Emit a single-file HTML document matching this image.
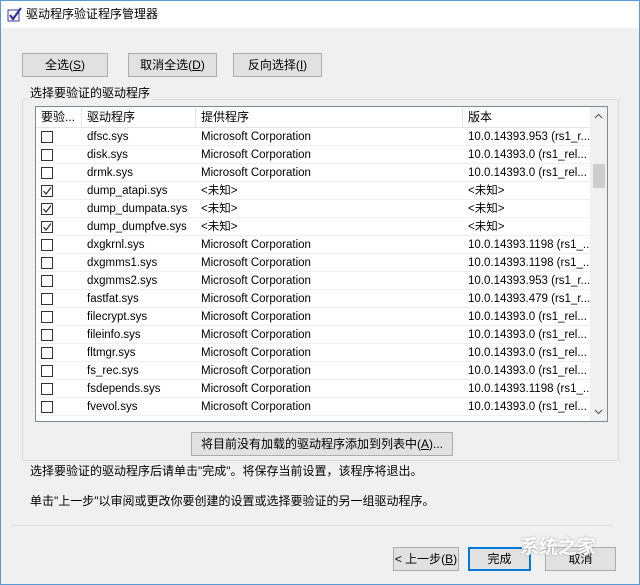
<!DOCTYPE html>
<html><head><meta charset="utf-8"><style>
*{margin:0;padding:0;box-sizing:border-box}
body{width:640px;height:585px;background:#f0f0f0;font-family:"Liberation Sans","Noto Sans CJK SC",sans-serif;font-size:12px;line-height:14px;color:#000;position:relative;overflow:hidden}
.a{position:absolute}
.btn{position:absolute;background:#e1e1e1;border:1px solid #adadad;text-align:center;font-size:12px}
.row{position:absolute;left:36px;width:554px;height:18px;border-bottom:1px solid #f0f0f0;background:#fff}
.row span{position:absolute;top:0;line-height:18px;white-space:nowrap;font-size:11.5px}
.cb{position:absolute;left:5px;top:3px;width:12px;height:12px;border:1px solid #333;background:#fff}
.cb svg{position:absolute;left:0;top:0}
</style></head><body>
<div class="a" style="left:0;top:0;width:640px;height:585px;border:1px solid #5b9bd5"></div>
<div class="a" style="left:1px;top:1px;width:638px;height:27px;background:#fff"></div>
<svg class="a" style="left:7px;top:6px" width="16" height="16"><rect x="1" y="4" width="11" height="11" fill="#fff" stroke="#3a3ab0"/><path d="M3 9 L6 13 L14 2" stroke="#3030a0" stroke-width="2.2" fill="none"/></svg>
<div class="a" style="left:26px;top:7px;font-size:12px">驱动程序验证程序管理器</div>
<div class="btn" style="left:22px;top:53px;width:86px;height:24px;line-height:22px">全选(<u>S</u>)</div>
<div class="btn" style="left:128px;top:53px;width:89px;height:24px;line-height:22px">取消全选(<u>D</u>)</div>
<div class="btn" style="left:233px;top:53px;width:89px;height:24px;line-height:22px">反向选择(<u>I</u>)</div>
<div class="a" style="left:22px;top:99px;width:597px;height:362px;border:1px solid #dcdcdc"></div>
<div class="a" style="left:28px;top:86px;background:#f0f0f0;padding:0 2px">选择要验证的驱动程序</div>
<div class="a" style="left:35px;top:106px;width:573px;height:316px;border:1px solid #828790;background:#fff"></div>
<div class="a" style="left:36px;top:107px;width:554px;height:21px;background:#fff;border-bottom:1px solid #e5e5e5"></div>
<div class="a" style="left:41px;top:110px">要验...</div>
<div class="a" style="left:87px;top:110px">驱动程序</div>
<div class="a" style="left:201px;top:110px">提供程序</div>
<div class="a" style="left:468px;top:110px">版本</div>
<div class="a" style="left:81px;top:107px;width:1px;height:21px;background:#e5e5e5"></div>
<div class="a" style="left:195px;top:107px;width:1px;height:21px;background:#e5e5e5"></div>
<div class="a" style="left:462px;top:107px;width:1px;height:21px;background:#e5e5e5"></div>
<div id="rows"></div>
<div class="a" style="left:590px;top:107px;width:17px;height:314px;background:#f0f0f0"></div>
<svg class="a" style="left:593px;top:112px" width="11" height="8"><path d="M2 6 L5.5 2.5 L9 6" stroke="#606060" stroke-width="1.2" fill="none"/></svg>
<div class="a" style="left:593px;top:164px;width:12px;height:24px;background:#cdcdcd"></div>
<svg class="a" style="left:593px;top:408px" width="11" height="8"><path d="M2 2 L5.5 5.5 L9 2" stroke="#606060" stroke-width="1.2" fill="none"/></svg>
<div class="btn" style="left:191px;top:432px;width:262px;height:24px;line-height:22px">将目前没有加载的驱动程序添加到列表中(<u>A</u>)...</div>
<div class="a" style="left:30px;top:464px">选择要验证的驱动程序后请单击"完成"。将保存当前设置，该程序将退出。</div>
<div class="a" style="left:30px;top:494px">单击"上一步"以审阅或更改你要创建的设置或选择要验证的另一组驱动程序。</div>
<div class="a" style="left:10px;top:525px;width:604px;height:1px;background:#dfdfdf"></div>
<div class="btn" style="left:393px;top:547px;width:66px;height:24px;line-height:22px">&lt; 上一步(<u>B</u>)</div>
<div class="btn" style="left:468px;top:547px;width:63px;height:24px;line-height:20px;border:2px solid #0078d7">完成</div>
<div class="btn" style="left:545px;top:547px;width:71px;height:24px;line-height:22px">取消</div>
<div class="a" style="left:520px;top:537px;font-size:19px;line-height:22px;color:#fff;font-weight:bold;text-shadow:0 0 2px #999">系统之家</div>
<script>
var d=[["dfsc.sys","Microsoft Corporation","10.0.14393.953 (rs1_r...",0],["disk.sys","Microsoft Corporation","10.0.14393.0 (rs1_rel...",0],["drmk.sys","Microsoft Corporation","10.0.14393.0 (rs1_rel...",0],["dump_atapi.sys","<未知>","<未知>",1],["dump_dumpata.sys","<未知>","<未知>",1],["dump_dumpfve.sys","<未知>","<未知>",1],["dxgkrnl.sys","Microsoft Corporation","10.0.14393.1198 (rs1_...",0],["dxgmms1.sys","Microsoft Corporation","10.0.14393.1198 (rs1_...",0],["dxgmms2.sys","Microsoft Corporation","10.0.14393.953 (rs1_r...",0],["fastfat.sys","Microsoft Corporation","10.0.14393.479 (rs1_r...",0],["filecrypt.sys","Microsoft Corporation","10.0.14393.0 (rs1_rel...",0],["fileinfo.sys","Microsoft Corporation","10.0.14393.0 (rs1_rel...",0],["fltmgr.sys","Microsoft Corporation","10.0.14393.0 (rs1_rel...",0],["fs_rec.sys","Microsoft Corporation","10.0.14393.0 (rs1_rel...",0],["fsdepends.sys","Microsoft Corporation","10.0.14393.1198 (rs1_...",0],["fvevol.sys","Microsoft Corporation","10.0.14393.0 (rs1_rel...",0]];
var h="";function e(s){return s.replace(/</g,"&lt;").replace(/>/g,"&gt;")}
d.forEach(function(r,i){h+='<div class="row" style="top:'+(128+i*18)+'px"><div class="cb">'+(r[3]?'<svg width="10" height="10"><path d="M1.5 5 L4 8 L9 1.5" stroke="#333" stroke-width="1.3" fill="none"/></svg>':'')+'</div><span style="left:51px">'+e(r[0])+'</span><span style="left:165px">'+e(r[1])+'</span><span style="left:432px">'+e(r[2])+'</span></div>'});
document.getElementById("rows").innerHTML=h;
</script>
</body></html>
